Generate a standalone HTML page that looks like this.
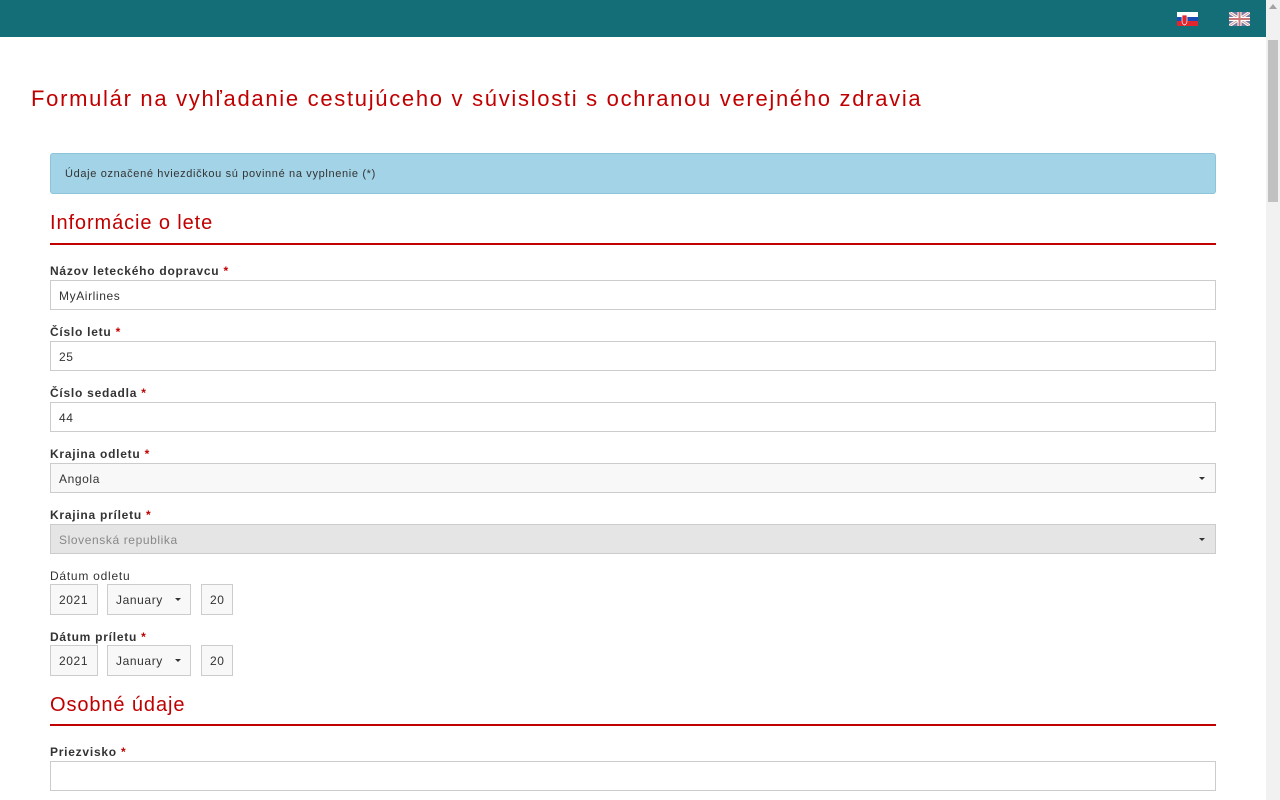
<!DOCTYPE html>
<html><head><meta charset="utf-8"><style>
*{box-sizing:border-box;margin:0;padding:0}
body{width:1280px;height:800px;overflow:hidden;background:#fff;font-family:"Liberation Sans",sans-serif;position:relative}
.top{position:absolute;left:0;top:0;width:1266px;height:37px;background:#136e77}
.sb{position:absolute;right:0;top:0;width:14px;height:800px;background:#f1f1f1}
.sb .th{position:absolute;left:2px;top:40px;width:10px;height:162px;background:#c1c1c1}
.sb .ar{position:absolute;left:3px;top:4px;width:0;height:0;border-left:4px solid transparent;border-right:4px solid transparent;border-bottom:5px solid #a3a3a3}
.a{position:absolute}
h1{position:absolute;left:31px;top:86px;font-size:22px;font-weight:normal;color:#c00000;letter-spacing:1.7px;white-space:nowrap}
.alert{position:absolute;left:50px;top:153px;width:1166px;height:41px;background:#a2d3e7;border:1px solid #8cc4da;border-radius:3px;font-size:11px;color:#333;padding:14px 0 0 14px;letter-spacing:.65px}
h2{position:absolute;left:50px;font-size:20px;font-weight:normal;color:#c00000;letter-spacing:.9px}
.hr{position:absolute;left:50px;width:1166px;height:2px;background:#c00000}
.lbl{position:absolute;left:50px;font-size:12px;font-weight:bold;color:#333;letter-spacing:.75px}
.lbl.n{font-weight:normal}
.lbl i{color:#c00000;font-style:normal}
.in{position:absolute;left:50px;width:1166px;height:30px;border:1px solid #ccc;font-size:12px;color:#333;padding:8px 0 0 8px;background:#fff;letter-spacing:.6px}
.sel{background:#f8f8f8}
.dis{background:#e5e5e5;color:#888}
.car{position:absolute;right:10px;top:13px;border-left:3px solid transparent;border-right:3px solid transparent;border-top:3px solid #333}
.sm{position:absolute;height:31px;border:1px solid #ccc;font-size:12px;color:#333;padding:8px 0 0 8px;background:#f8f8f8;letter-spacing:.6px}
</style></head><body>
<div class="top">
<svg class="a" style="left:1177px;top:12px" width="21" height="14"><rect width="21" height="5" fill="#fff"/><rect y="5" width="21" height="4" fill="#1b4bb5"/><rect y="9" width="21" height="5" fill="#e1262d"/><path d="M5 3h5v6q0 3-2.5 4q-2.5-1-2.5-4z" fill="#e1262d" stroke="#fff" stroke-width=".7"/></svg>
<svg class="a" style="left:1229px;top:12px" width="21" height="14"><rect width="21" height="14" fill="#7a7aa0"/><path d="M0 0L21 14M21 0L0 14" stroke="#fff" stroke-width="3"/><path d="M0 0L21 14M21 0L0 14" stroke="#c99" stroke-width="1"/><path d="M10.5 0V14M0 7H21" stroke="#fff" stroke-width="4"/><path d="M10.5 0V14M0 7H21" stroke="#c77" stroke-width="2"/></svg>
</div>
<div class="sb"><div class="ar"></div><div class="th"></div></div>
<h1>Formulár na vyhľadanie cestujúceho v súvislosti s ochranou verejného zdravia</h1>
<div class="alert">Údaje označené hviezdičkou sú povinné na vyplnenie (*)</div>
<h2 style="top:212px">Informácie o lete</h2><div class="hr" style="top:243px"></div>
<div class="lbl" style="top:264px">Názov leteckého dopravcu <i>*</i></div>
<div class="in" style="top:280px">MyAirlines</div>
<div class="lbl" style="top:325px">Číslo letu <i>*</i></div>
<div class="in" style="top:341px">25</div>
<div class="lbl" style="top:386px">Číslo sedadla <i>*</i></div>
<div class="in" style="top:402px">44</div>
<div class="lbl" style="top:447px">Krajina odletu <i>*</i></div>
<div class="in sel" style="top:463px">Angola<span class="car"></span></div>
<div class="lbl" style="top:508px">Krajina príletu <i>*</i></div>
<div class="in dis" style="top:524px">Slovenská republika<span class="car"></span></div>
<div class="lbl n" style="top:569px">Dátum odletu</div>
<div class="sm" style="left:50px;top:584px;width:48px">2021</div>
<div class="sm" style="left:107px;top:584px;width:84px">January<span class="car" style="right:9px"></span></div>
<div class="sm" style="left:201px;top:584px;width:32px">20</div>
<div class="lbl" style="top:630px">Dátum príletu <i>*</i></div>
<div class="sm" style="left:50px;top:645px;width:48px">2021</div>
<div class="sm" style="left:107px;top:645px;width:84px">January<span class="car" style="right:9px"></span></div>
<div class="sm" style="left:201px;top:645px;width:32px">20</div>
<h2 style="top:694px">Osobné údaje</h2><div class="hr" style="top:724px"></div>
<div class="lbl" style="top:745px">Priezvisko <i>*</i></div>
<div class="in" style="top:761px"></div>
</body></html>
